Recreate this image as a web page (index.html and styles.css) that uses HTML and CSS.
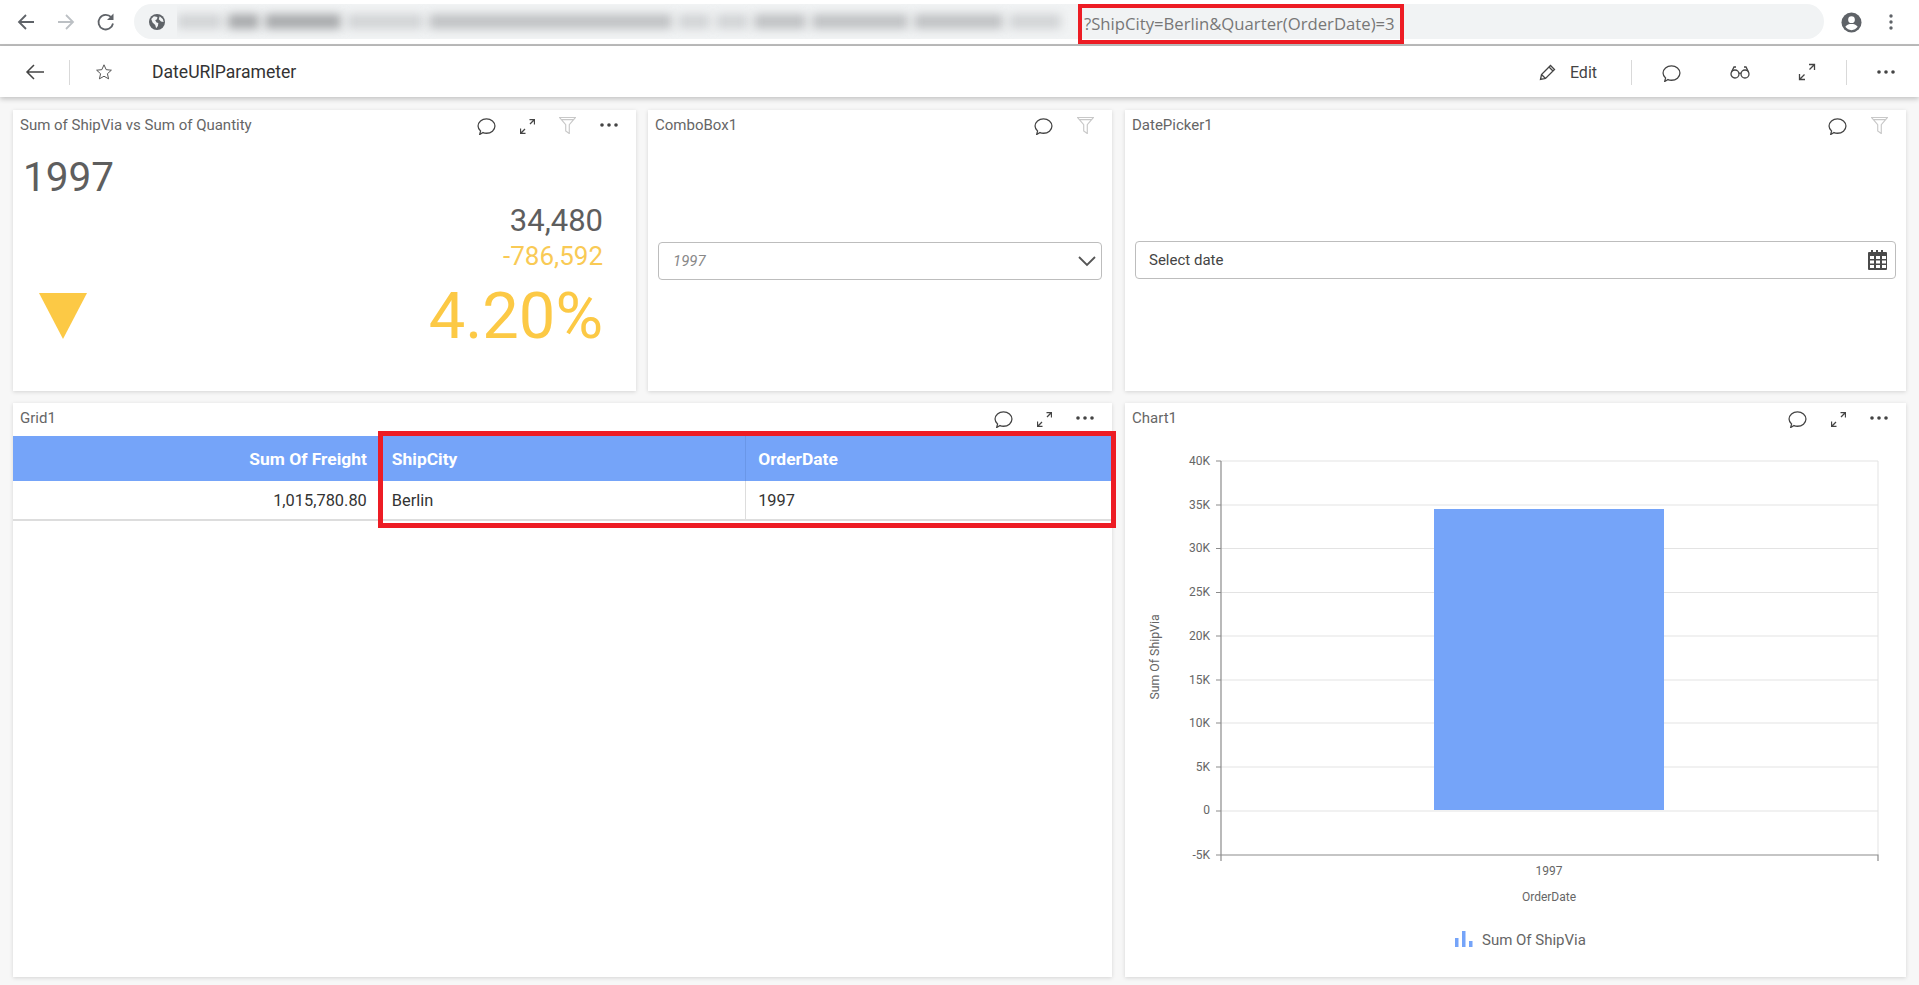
FILE: index.html
```html
<!DOCTYPE html>
<html lang="en">
<head>
    <meta charset="UTF-8">
    <title>DateURlParameter</title>
    <link rel="stylesheet" href="styles.css">
</head>
<body>
    <!-- browser chrome -->
    <div class="chrome">
        <svg class="chrome-icon nav-back" viewBox="0 0 20 20"><path d="M18 10H3M10 3 3 10l7 7"/></svg>
        <svg class="chrome-icon nav-forward" viewBox="0 0 20 20"><path d="M2 10h15M10 3l7 7-7 7"/></svg>
        <svg class="chrome-icon nav-reload" viewBox="0 0 20 20"><path d="M17 11.500A7.300 7.300 0 1 1 15.200 5.200"/><path class="solid" d="M17.500 1.500v6.500h-6.500z"/></svg>
        <div class="address">
            <svg class="globe" viewBox="0 0 18 18"><circle cx="9" cy="9" r="9" fill="#5f6368"/><path fill="#f1f3f4" d="M2.500 5.500 5.500 2.500l4 1-.5 2.500-2 1 1.500 2.500 2 .5-.5 3.500-2 2.500-1-3.500L4 9.500zM12 2.500l3.500 3 1 3.500-3-.5-2.500-2.500z"/></svg>
            <div class="blurred">
                <span class="smear light w36"></span>
                <span class="smear dark w22"></span>
                <span class="smear dark w67"></span>
                <span class="smear light w67"></span>
                <span class="smear mid w234"></span>
                <span class="smear light w23"></span>
                <span class="smear light w23"></span>
                <span class="smear mid w43"></span>
                <span class="smear mid w87"></span>
                <span class="smear mid w80"></span>
                <span class="smear light w43"></span>
            </div>
            <span class="url-query">?ShipCity=Berlin&amp;Quarter(OrderDate)=3</span>
        </div>
        <svg class="avatar" viewBox="0 0 22 22"><circle cx="11" cy="11" r="10.500" fill="#5f6368"/><circle cx="11" cy="8" r="3.500" fill="#fff"/><path fill="#fff" d="M4.500 15.500c1.500-2.500 4-3 6.500-3s5 .5 6.500 3c-1.500 2-4 3.500-6.500 3.500s-5-1.500-6.500-3.500z"/></svg>
        <svg class="kebab" viewBox="0 0 4 16"><circle cx="2" cy="2" r="1.700"/><circle cx="2" cy="8" r="1.700"/><circle cx="2" cy="14" r="1.700"/></svg>
    </div>

    <!-- app toolbar -->
    <header class="toolbar">
        <svg class="tool-icon back" viewBox="0 0 20 20"><path d="M19 10H2M9 3 2 10l7 7"/></svg>
        <span class="tool-divider first"></span>
        <svg class="tool-icon star" viewBox="0 0 20 20"><path d="M10 2l2.400 5.400 5.800.6-4.400 3.900 1.300 5.700L10 14.700l-5.100 2.900 1.300-5.700L1.800 8l5.800-.6z"/></svg>
        <h1 class="dash-title">DateURlParameter</h1>
        <svg class="tool-icon pencil" viewBox="0 0 18 18"><path d="M1.500 16.500l1-5L11.500 2.500l4 4-9 9zM2.500 11.500l4 4M10 4l4 4"/></svg>
        <span class="edit-label">Edit</span>
        <span class="tool-divider"></span>
        <svg class="ico bubble bubble-lg"><use href="#i-bubble"/></svg>
        <svg class="tool-icon glasses" viewBox="0 0 20 14"><circle cx="5" cy="9" r="4"/><circle cx="15" cy="9" r="4"/><path d="M9 8.500c.7-.6 1.300-.6 2 0M1.500 7 4 2h2M18.500 7 16 2h-2"/></svg>
        <svg class="tool-icon expand-lg" viewBox="0 0 18 18"><path d="M11.500 6.500 16.500 1.500M11 1.500h5.500V7M6.500 11.500l-5 5M1.500 11v5.500H7"/></svg>
        <span class="tool-divider last"></span>
        <svg class="dots-lg" viewBox="1 8 18 4"><use href="#i-dots-shape"/></svg>
    </header>

    <main class="dashboard">
        <!-- KPI -->
        <section class="card kpi-card">
            <div class="card-head">
                <span class="card-title">Sum of ShipVia vs Sum of Quantity</span>
                <svg class="ico bubble"><use href="#i-bubble"/></svg>
                <svg class="ico expand"><use href="#i-expand"/></svg>
                <svg class="ico funnel"><use href="#i-funnel"/></svg>
                <svg class="ico more"><use href="#i-dots"/></svg>
            </div>
            <div class="kpi-year">1997</div>
            <div class="kpi-value">34,480</div>
            <div class="kpi-diff">-786,592</div>
            <div class="kpi-bottom">
                <svg class="kpi-arrow" viewBox="0 0 48 46"><path d="M0 0h48L24 46z"/></svg>
                <span class="kpi-percent">4.20%</span>
            </div>
        </section>

        <!-- combo -->
        <section class="card">
            <div class="card-head">
                <span class="card-title">ComboBox1</span>
                <svg class="ico bubble"><use href="#i-bubble"/></svg>
                <svg class="ico funnel"><use href="#i-funnel"/></svg>
            </div>
            <div class="field-wrap">
                <div class="field field-combo">
                    <span class="combo-value">1997</span>
                    <svg class="chevron" viewBox="0 0 18 11"><path d="M1 1l8 8 8-8"/></svg>
                </div>
            </div>
        </section>

        <!-- date picker -->
        <section class="card card-right">
            <div class="card-head">
                <span class="card-title">DatePicker1</span>
                <svg class="ico bubble"><use href="#i-bubble"/></svg>
                <svg class="ico funnel"><use href="#i-funnel"/></svg>
            </div>
            <div class="field-wrap">
                <div class="field field-date">
                    <span class="date-value">Select date</span>
                    <svg class="calendar" viewBox="0 0 20 20">
                        <path fill="#4a4a4a" d="M1 2h2V0h2v2h3V0h2v2h3V0h2v2h3a1 1 0 0 1 1 1v16a1 1 0 0 1-1 1H1a1 1 0 0 1-1-1V3a1 1 0 0 1 1-1z"/>
                        <path fill="#fff" d="M2 6h4v3H2zM8 6h4v3H8zM14 6h4v3h-4zM2 10.500h4v3H2zM8 10.500h4v3H8zM14 10.500h4v3h-4zM2 15h4v3H2zM8 15h4v3H8zM14 15h4v3h-4z"/>
                    </svg>
                </div>
            </div>
        </section>

        <!-- grid -->
        <section class="card grid-card">
            <div class="card-head">
                <span class="card-title">Grid1</span>
                <svg class="ico bubble"><use href="#i-bubble"/></svg>
                <svg class="ico expand"><use href="#i-expand"/></svg>
                <svg class="ico more"><use href="#i-dots"/></svg>
            </div>
            <table class="data-grid">
                <thead>
                    <tr><th class="num">Sum Of Freight</th><th>ShipCity</th><th>OrderDate</th></tr>
                </thead>
                <tbody>
                    <tr><td class="num">1,015,780.80</td><td>Berlin</td><td>1997</td></tr>
                </tbody>
            </table>
            <div class="grid-highlight"></div>
        </section>

        <!-- chart -->
        <section class="card card-right chart-card">
            <div class="card-head">
                <span class="card-title">Chart1</span>
                <svg class="ico bubble"><use href="#i-bubble"/></svg>
                <svg class="ico expand"><use href="#i-expand"/></svg>
                <svg class="ico more"><use href="#i-dots"/></svg>
            </div>
            <svg class="chart" viewBox="0 0 781 541">
                <g class="grid-lines">
                    <path d="M96 25H753M96 69H753M96 112.500H753M96 156.500H753M96 200H753M96 244H753M96 287H753M96 331H753M96 375H753M753 25V419"/>
                </g>
                <rect class="bar" x="309" y="73" width="230" height="301"/>
                <path class="axis" d="M96 25V425M96 419H753V425M91 25h5M91 69h5M91 112.500h5M91 156.500h5M91 200h5M91 244h5M91 287h5M91 331h5M91 375h5M91 419h5"/>
                <g class="tick-labels">
                    <text x="85" y="29">40K</text>
                    <text x="85" y="73">35K</text>
                    <text x="85" y="116">30K</text>
                    <text x="85" y="160">25K</text>
                    <text x="85" y="204">20K</text>
                    <text x="85" y="248">15K</text>
                    <text x="85" y="291">10K</text>
                    <text x="85" y="335">5K</text>
                    <text x="85" y="378">0</text>
                    <text x="85" y="423">-5K</text>
                </g>
                <text class="x-label" x="424" y="439">1997</text>
                <text class="axis-title" x="424" y="465">OrderDate</text>
                <text class="axis-title y-title" transform="translate(34 221) rotate(-90)">Sum Of ShipVia</text>
                <g class="legend-icon">
                    <rect x="330" y="502" width="3.500" height="9"/>
                    <rect x="337" y="495" width="3.500" height="16"/>
                    <rect x="344" y="505" width="3.500" height="6"/>
                </g>
                <text class="legend-text" x="357" y="509">Sum Of ShipVia</text>
            </svg>
        </section>
    </main>

    <!-- shared card icons -->
    <svg class="defs" width="0" height="0">
        <symbol id="i-bubble" viewBox="0.500 0.500 19 17.500"><path fill="none" stroke="currentColor" stroke-width="1.300" d="M3 17.500 3.900 13.800C2.300 12.400 1.300 10.800 1.300 8.800 1.300 4.700 5.200 1.300 10 1.300s8.700 3.400 8.700 7.500-3.900 7.400-8.700 7.400c-1.300 0-2.500-.2-3.600-.7z"/></symbol>
        <symbol id="i-expand" viewBox="2.500 2.500 15 15"><path fill="none" stroke="currentColor" stroke-width="1.300" d="M12.500 7.500 17 3M12 3h5v5M7.500 12.500 3 17M3 12v5h5"/></symbol>
        <symbol id="i-funnel" viewBox="0.500 0.500 19 19"><path fill="none" stroke="currentColor" stroke-width="1.300" d="M1 1h18l-7 8v10l-4-3V9zM3 3.500h14"/></symbol>
        <g id="i-dots-shape"><circle cx="3" cy="10" r="1.800" fill="#444"/><circle cx="10" cy="10" r="1.800" fill="#444"/><circle cx="17" cy="10" r="1.800" fill="#444"/></g>
        <symbol id="i-dots" viewBox="1 8 18 4"><use href="#i-dots-shape"/></symbol>
    </svg>
</body>
</html>
```

FILE: styles.css
```css
* {
    box-sizing: border-box;
}

body {
    margin: 0;
    height: 985px;
    overflow: hidden;
    background-color: #f7f7f7;
    font-family: Roboto, "Liberation Sans", sans-serif;
    color: #5e5e5e;
}

/* browser chrome */
.chrome {
    display: flex;
    align-items: flex-start;
    height: 46px;
    padding-top: 4px;
    background-color: #fff;
    border-bottom: 2px solid #bdbdbd;
}

.chrome-icon {
    width: 20px;
    height: 20px;
    margin-top: 8px;
    fill: none;
    stroke: #5f6368;
    stroke-width: 1.800;
    flex: none;
}

.chrome-icon .solid {
    fill: #5f6368;
    stroke: none;
}

.nav-back {
    margin-left: 16px;
}

.nav-forward {
    margin-left: 20px;
    stroke: #bcc0c4;
}

.nav-reload {
    margin-left: 20px;
}

.address {
    display: flex;
    align-items: flex-start;
    width: 1690px;
    height: 35px;
    margin-left: 18px;
    padding-left: 15px;
    border-radius: 18px;
    background-color: #f1f3f4;
}

.globe {
    width: 16px;
    height: 16px;
    margin-top: 10px;
    flex: none;
}

.blurred {
    display: flex;
    align-items: center;
    gap: 6px;
    width: 901px;
    height: 35px;
    margin-left: 12px;
    overflow: hidden;
    flex: none;
}

.smear {
    height: 15px;
    filter: blur(5px);
    flex: none;
}

.light { background-color: #d2d4d6; }
.mid { background-color: #c0c2c4; }
.dark { background-color: #a8aaac; }

.w22 { width: 31px; }
.w23 { width: 32px; }
.w36 { width: 45px; }
.w43 { width: 52px; }
.w67 { width: 76px; }
.w80 { width: 89px; }
.w87 { width: 96px; }
.w234 { width: 243px; }

.url-query {
    width: 326px;
    height: 40px;
    padding-left: 2px;
    border: 4px solid #ed1c24;
    font-family: "Open Sans", Roboto, sans-serif;
    font-size: 16.700px;
    line-height: 31px;
    white-space: nowrap;
    color: #777;
    flex: none;
}

.avatar {
    width: 21px;
    height: 21px;
    margin: 8px 0 0 17px;
    flex: none;
}

.kebab {
    width: 4px;
    height: 16px;
    margin: 10px 0 0 27px;
    fill: #5f6368;
    flex: none;
}

/* app toolbar */
.toolbar {
    display: flex;
    align-items: center;
    height: 51px;
    padding-top: 1px;
    background-color: #fff;
    box-shadow: 0 2px 5px rgba(0, 0, 0, .22);
    position: relative;
}

.tool-icon {
    fill: none;
    stroke: #444;
    stroke-width: 1.300;
    flex: none;
}

.back {
    width: 20px;
    height: 20px;
    margin-left: 25px;
    stroke-width: 1.500;
}

.tool-divider {
    width: 1px;
    height: 25px;
    margin-left: 34px;
    background-color: #d9d9d9;
    flex: none;
}

.tool-divider.first {
    margin-left: 24px;
}

.star {
    width: 18px;
    height: 18px;
    margin-left: 25px;
    stroke-width: 1;
}

.dash-title {
    margin: 0 0 0 39px;
    font-size: 17.600px;
    font-weight: 400;
    color: #333;
    flex: 1;
}

.pencil {
    width: 18px;
    height: 18px;
}

.edit-label {
    margin-left: 13px;
    font-size: 16px;
    color: #444;
}

.ico.bubble-lg {
    margin: -2px 0 0 30px;
}

.glasses {
    width: 20px;
    height: 14px;
    margin-left: 49px;
}

.expand-lg {
    width: 18px;
    height: 18px;
    margin-left: 48px;
}

.tool-divider.last {
    margin-left: 30px;
}

.dots-lg {
    width: 18px;
    height: 4px;
    margin: 0 24px 0 30px;
    flex: none;
}

/* dashboard cards */
.dashboard {
    display: grid;
    grid-template-columns: 623px 464px 782px;
    grid-template-rows: 281px 574px;
    column-gap: 12px;
    row-gap: 12px;
    padding: 13px 0 0 13px;
}

.card {
    display: flex;
    flex-direction: column;
    position: relative;
    background-color: #fff;
    box-shadow: 0 1px 4px rgba(0, 0, 0, .14);
}

.card-right {
    margin-left: 1px;
}

.card-head {
    display: flex;
    align-items: center;
    gap: 24px;
    height: 33px;
    padding: 0 18px 3px 7px;
    flex: none;
}

.card-title {
    font-size: 15px;
    color: #666;
    margin-right: auto;
}

.ico {
    color: #444;
    flex: none;
}

.ico.bubble {
    width: 19px;
    height: 17px;
    margin-top: 3px;
}

.ico.expand {
    width: 15px;
    height: 15px;
    margin-top: 3px;
}

.ico.funnel {
    width: 17px;
    height: 17px;
    color: #c8c8c8;
}

.ico.more {
    width: 18px;
    height: 4px;
}

/* KPI */
.kpi-year {
    margin: 11px 0 0 10px;
    font-size: 40.500px;
    line-height: 47px;
}

.kpi-value {
    margin: 2px 33px 0 0;
    font-size: 31px;
    line-height: 35px;
    text-align: right;
}

.kpi-diff {
    margin: 3px 33px 0 0;
    font-size: 26px;
    line-height: 30px;
    text-align: right;
    color: #f9ca55;
}

.kpi-bottom {
    display: flex;
    justify-content: space-between;
    align-items: center;
    margin: 14px 33px 0 26px;
    color: #fcc945;
}

.kpi-arrow {
    width: 48px;
    height: 46px;
    fill: #fcc945;
}

.kpi-percent {
    font-size: 65px;
    line-height: 62px;
}

/* combo and date fields */
.field-wrap {
    flex: 1;
    padding: 99px 10px 0;
}

.field {
    display: flex;
    align-items: center;
    justify-content: space-between;
    height: 38px;
    border: 1px solid #bdbdbd;
    border-radius: 4px;
}

.field-combo {
    padding: 0 5px 0 14px;
}

.combo-value {
    font-size: 15px;
    font-style: italic;
    color: #888;
}

.chevron {
    width: 18px;
    height: 11px;
    fill: none;
    stroke: #555;
    stroke-width: 1.800;
}

.field-date {
    margin-top: -1px;
    padding: 0 7px 0 13px;
}

.date-value {
    font-size: 15px;
    color: #444;
}

.calendar {
    width: 20px;
    height: 20px;
}

/* grid */
.grid-card {
    grid-column: span 2;
}

.data-grid {
    width: 100%;
    border-collapse: collapse;
    table-layout: fixed;
}

.data-grid th,
.data-grid td {
    padding: 0 12px;
    text-align: left;
}

.data-grid th {
    height: 45px;
    background-color: #75a4f9;
    color: #fff;
    font-size: 17.400px;
    font-weight: 700;
    border-left: 1px solid #6a97e8;
}

.data-grid th:first-child,
.data-grid td:first-child {
    border-left: none;
}

.data-grid td {
    height: 39px;
    font-size: 16.400px;
    color: #333;
    border-left: 1px solid #ddd;
    border-bottom: 2px solid #ddd;
}

.data-grid .num {
    text-align: right;
}

.grid-highlight {
    position: absolute;
    left: 365px;
    top: 28px;
    width: 738px;
    height: 97px;
    border: 5px solid #ed1c24;
}

/* chart */
.chart {
    display: block;
    width: 781px;
    height: 541px;
}

.grid-lines path {
    fill: none;
    stroke: #e3e3e3;
}

.bar {
    fill: #75a4f9;
}

.axis {
    fill: none;
    stroke: #8c8c8c;
    stroke-width: 1.200;
}

.tick-labels text {
    font-size: 12px;
    fill: #666;
    text-anchor: end;
}

.x-label {
    font-size: 12px;
    fill: #666;
    text-anchor: middle;
}

.axis-title {
    font-size: 12px;
    fill: #666;
    text-anchor: middle;
}

.y-title {
    font-size: 12.300px;
}

.legend-icon rect {
    fill: #75a4f9;
}

.legend-text {
    font-size: 15px;
    fill: #666;
}

.defs {
    position: absolute;
}
```
